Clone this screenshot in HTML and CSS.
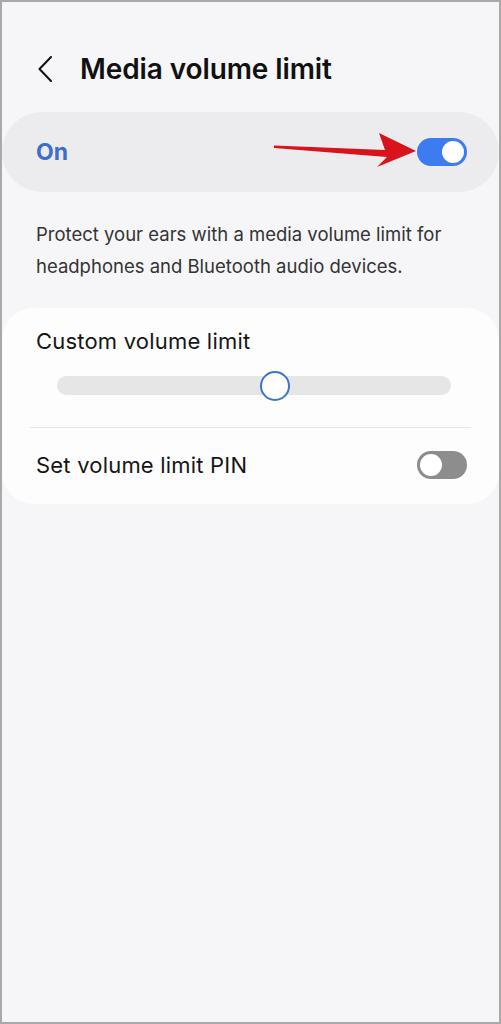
FILE: index.html
```html
<!doctype html>
<html>

<head>
    <meta charset="utf-8">
    <title>Media volume limit</title>
    <link rel="stylesheet" href="styles.css">
</head>

<body>
    <div class="screen">
        <div class="header">
            <svg class="back" width="16" height="26" viewBox="0 0 16 26">
                <path d="M14 1 L2.5 13 L14 25" fill="none" stroke="#111" stroke-width="2" stroke-linecap="round" stroke-linejoin="round" />
            </svg>
            <h1>Media volume limit</h1>
        </div>

        <div class="master">
            <span class="master-label">On</span>
            <div class="master-right">
                <svg class="arrow" width="146" height="36" viewBox="0 0 146 36">
                    <path d="M1 13.5 L112 18 L106 1 L143 19 L104 35 L114 25 L1 16 Z" fill="#d8131b" />
                </svg>
                <span class="switch on"><span class="knob"></span></span>
            </div>
        </div>

        <p class="desc">Protect your ears with a media volume limit for headphones and Bluetooth audio devices.</p>

        <div class="card">
            <div class="row slider-row">
                <div class="row-title">Custom volume limit</div>
                <div class="track">
                    <span class="thumb" style="left: 55.3%"></span>
                </div>
            </div>
            <div class="divider"></div>
            <div class="row pin-row">
                <span class="row-title">Set volume limit PIN</span>
                <span class="switch off"><span class="knob"></span></span>
            </div>
        </div>
    </div>
</body>

</html>
```

FILE: styles.css
```css
* {
    margin: 0;
    padding: 0;
    box-sizing: border-box;
}

body {
    background: #f6f6f8;
    font-family: Inter, "Noto Sans", "Liberation Sans", sans-serif;
    color: #111;
}

.screen {
    width: 501px;
    height: 1024px;
    border: 2px solid #a9a9a9;
    background: #f6f6f8;
    overflow: hidden;
}

.header {
    display: flex;
    align-items: center;
    height: 66px;
    margin-top: 34px;
    padding-left: 35px;
    gap: 27px;
}

.header h1 {
    font-size: 28px;
    font-weight: 600;
    letter-spacing: -0.1px;
}

.master {
    display: flex;
    align-items: center;
    justify-content: space-between;
    height: 80px;
    margin-top: 10px;
    padding: 0 32px 0 34px;
    background: #ececee;
    border-radius: 40px;
}

.master-label {
    font-size: 23px;
    font-weight: 700;
    color: #3d6ecb;
}

.master-right {
    display: flex;
    align-items: center;
}

.arrow {
    margin-right: -2px;
    margin-top: -4px;
}

.switch {
    position: relative;
    display: inline-block;
    width: 50px;
    height: 28px;
    border-radius: 14px;
}

.switch .knob {
    position: absolute;
    top: 3px;
    width: 22px;
    height: 22px;
    border-radius: 50%;
    background: #fff;
}

.switch.on {
    background: #3c7cf0;
}

.switch.on .knob {
    right: 3px;
}

.switch.off {
    background: #8d8d8d;
}

.switch.off .knob {
    left: 3px;
}

.desc {
    padding: 26px 30px 0 34px;
    font-size: 18.5px;
    line-height: 32px;
    color: #333;
}

.card {
    margin-top: 26px;
    background: #fdfdfd;
    border-radius: 32px;
    padding: 14px 28px 2px 28px;
}

.row-title {
    font-size: 22px;
    letter-spacing: 0.2px;
    color: #161616;
}

.slider-row {
    padding: 6px 6px 0 6px;
}

.track {
    position: relative;
    height: 19px;
    margin: 22px 14px 32px 21px;
    background: #e6e6e7;
    border-radius: 10px;
}

.thumb {
    position: absolute;
    top: 50%;
    width: 30px;
    height: 30px;
    margin: -15px 0 0 -15px;
    background: #fff;
    border: 2.5px solid #3f72cf;
    border-radius: 50%;
}

.divider {
    height: 1px;
    background: #e6e6e8;
}

.pin-row {
    display: flex;
    align-items: center;
    justify-content: space-between;
    height: 74px;
    padding: 0 4px 0 6px;
}
```
